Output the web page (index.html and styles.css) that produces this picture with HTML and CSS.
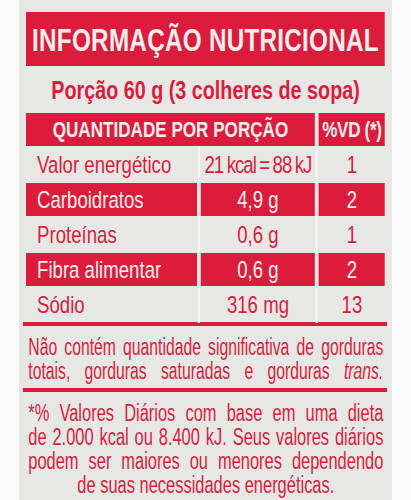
FILE: index.html
```html
<!DOCTYPE html>
<html lang="pt-BR">
<head>
<meta charset="utf-8">
<title>Informação Nutricional</title>
<link rel="stylesheet" href="styles.css">
</head>
<body>
<div class="panel">
  <div class="content">
    <div class="title">INFORMAÇÃO NUTRICIONAL</div>
    <div class="portion">Porção 60 g (3 colheres de sopa)</div>
    <div class="table">
      <div class="cell head span2">QUANTIDADE POR PORÇÃO</div>
      <div class="cell head vd">%VD (*)</div>

      <div class="cell name">Valor energético</div>
      <div class="cell val line tight">21 kcal = 88 kJ</div>
      <div class="cell val line">1</div>

      <div class="cell name red">Carboidratos</div>
      <div class="cell val red">4,9 g</div>
      <div class="cell val red">2</div>

      <div class="cell name">Proteínas</div>
      <div class="cell val line">0,6 g</div>
      <div class="cell val line">1</div>

      <div class="cell name red">Fibra alimentar</div>
      <div class="cell val red">0,6 g</div>
      <div class="cell val red">2</div>

      <div class="cell name">Sódio</div>
      <div class="cell val line">316 mg</div>
      <div class="cell val line">13</div>
    </div>
    <div class="rule"></div>
    <p class="note">
      <span class="ln">Não contém quantidade significativa de gorduras</span>
      <span class="ln">totais, gorduras saturadas e gorduras <em>trans.</em></span>
    </p>
    <div class="rule rule2"></div>
    <p class="foot">
      <span class="ln">*% Valores Diários com base em uma dieta</span>
      <span class="ln">de 2.000 kcal ou 8.400 kJ. Seus valores diários</span>
      <span class="ln">podem ser maiores ou menores dependendo</span>
      <span class="ln last">de suas necessidades energéticas.</span>
    </p>
  </div>
</div>
</body>
</html>
```

FILE: styles.css
```css
* { box-sizing: border-box; }
html, body { margin: 0; padding: 0; background: #f9f9f9; }
body {
  font-family: "Liberation Sans", Arial, sans-serif;
  color: #d81e3d;
  width: 411px;
  height: 500px;
  overflow: hidden;
}
.panel {
  margin-left: 19px;
  width: 373px;
  height: 500px;
  background: #e7e7e6;
  padding: 12px 7px 0;
  overflow: hidden;
}
/* condensed type: the whole sheet is squeezed horizontally */
.content {
  width: 472.4px;
  transform: scaleX(0.76);
  transform-origin: 0 0;
}
.title {
  background: #db1d3d;
  color: #f4eded;
  height: 54px;
  display: flex;
  align-items: center;
  justify-content: center;
  font-weight: bold;
  font-size: 32px;
  letter-spacing: 0.3px;
  padding-top: 3px;
}
.portion {
  height: 47px;
  display: flex;
  align-items: center;
  justify-content: center;
  font-weight: bold;
  font-size: 26px;
  padding-top: 2px;
}
.table {
  display: grid;
  grid-template-columns: 225px 150px 87px;
  grid-auto-rows: 33px;
  column-gap: 5.2px;
  row-gap: 2px;
}
.cell {
  display: flex;
  align-items: center;
  font-size: 24.5px;
  padding-top: 1px;
  white-space: nowrap;
}
.span2 { grid-column: span 2; }
.head {
  background: #db1d3d;
  color: #f4eded;
  font-weight: bold;
  font-size: 22.5px;
  justify-content: center;
}
.vd { letter-spacing: -0.4px; }
.name { padding-left: 14.5px; }
.val { justify-content: center; }
.tight { letter-spacing: -1.3px; word-spacing: -1px; }
.line { position: relative; }
.line::before {
  content: "";
  position: absolute;
  left: -3.9px;
  top: -2px;
  bottom: -2px;
  width: 2.6px;
  background: #f5f5f4;
}
.red {
  background: #db1d3d;
  color: #f4eded;
}
.rule {
  height: 4px;
  background: #db1d3d;
  margin: 1px -2.6px 0 -3.9px;
}
.rule2 { margin-top: 4.7px; }
.note, .foot {
  margin: 0 2.6px;
  transform-origin: 0 0;
}
.ln {
  display: block;
  text-align: justify;
  text-align-last: justify;
}
.last { text-align-last: center; }
/* the notes use an even narrower cut of the type */
.note {
  width: 519px;
  transform: scaleX(0.9);
  font-size: 23px;
  line-height: 23.5px;
  padding-top: 10.3px;
}
.note em { font-style: italic; }
.foot {
  width: 507.3px;
  transform: scaleX(0.921);
  font-size: 23.5px;
  line-height: 24px;
  padding-top: 8.8px;
}
```
